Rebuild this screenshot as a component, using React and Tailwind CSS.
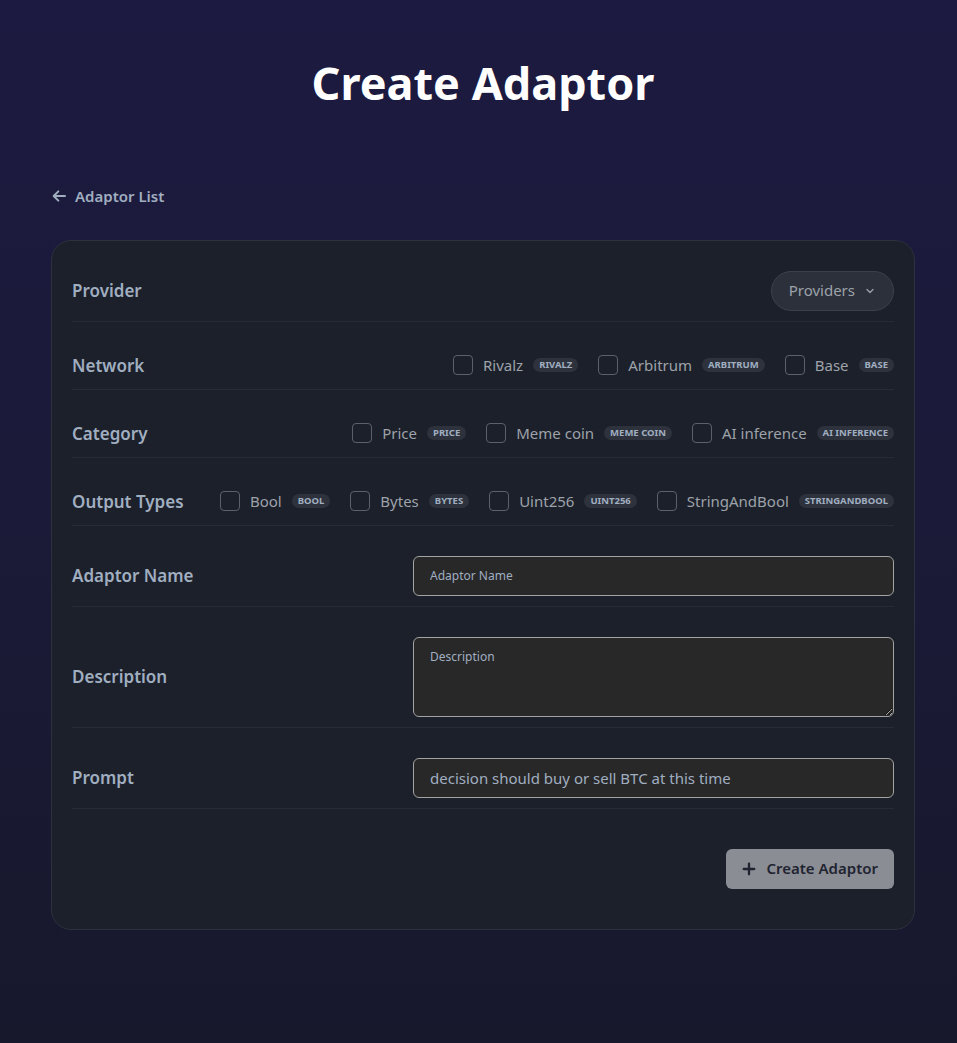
import React, { useState } from 'react';

const networks = [
    { name: "Rivalz", tag: "RIVALZ" },
    { name: "Arbitrum", tag: "ARBITRUM" },
    { name: "Base", tag: "BASE" },
];
const categories = [
    { name: "Price", tag: "PRICE" },
    { name: "Meme coin", tag: "MEME COIN" },
    { name: "AI inference", tag: "AI INFERENCE" },
];
const outputTypes = [
    { name: "Bool", tag: "BOOL" },
    { name: "Bytes", tag: "BYTES" },
    { name: "Uint256", tag: "UINT256" },
    { name: "StringAndBool", tag: "STRINGANDBOOL" },
];

function Row(props) {
    return (
        <div className="flex items-center justify-between py-2.5 border-b border-[#262b36]">
            <div className="text-[17px] leading-[27px] font-semibold text-[#a0aec0]">{props.label}</div>
            {props.children}
        </div>
    );
}

function CheckGroup(props) {
    const [checked, setChecked] = useState({});
    return (
        <div className="flex items-center gap-5">
            {props.items.map((item) => (
                <label key={item.tag} className="flex items-center cursor-pointer">
                    <span
                        onClick={() => setChecked({ ...checked, [item.tag]: !checked[item.tag] })}
                        className="w-5 h-5 rounded-[4px] border border-[#5b606b] mr-2.5"
                    ></span>
                    <span className="text-[15px] text-[#9ea2a9]">{item.name}</span>
                    <span className="ml-2.5 px-1.5 rounded-full bg-[#2d323d] text-[9.5px] leading-[14px] font-bold text-[#a0aec0]">{item.tag}</span>
                </label>
            ))}
        </div>
    );
}

/* Create adaptor form page. */
export default function App() {
    const [prompt, setPrompt] = useState("decision should buy or sell BTC at this time");

    return (
        <div className="min-h-[1043px] bg-gradient-to-b from-[#1c1a40] via-[#1b1a38] to-[#17182c] font-['Noto_Sans',sans-serif] pl-[51px] pr-[42px]">
            <h1 className="pt-[57px] text-center text-[45px] leading-[52px] font-bold text-white">Create Adaptor</h1>
            <div className="mt-[76px] flex items-center gap-[8px] text-[#a0aec0] text-[15px] font-semibold">
                <svg className="w-[16px] h-[16px]" viewBox="0 0 24 24" fill="none" stroke="currentColor" strokeWidth="3" strokeLinecap="round" strokeLinejoin="round">
                    <path d="M21 12H4M11 19l-7-7 7-7" />
                </svg>
                <span>Adaptor List</span>
            </div>
            <div className="mt-[32px] rounded-[20px] border border-[#2c313d] bg-[#1b202b] px-5 pt-5 pb-10 flex flex-col gap-5">
                <Row label="Provider">
                    <button className="h-10 px-[17px] rounded-full border border-[#3b404b] bg-[#2b303b] text-[#9ea2a9] text-[15px] flex items-center gap-[9px]">
                        Providers
                        <svg className="w-3 h-3" viewBox="0 0 24 24" fill="none" stroke="currentColor" strokeWidth="2.5" strokeLinecap="round" strokeLinejoin="round">
                            <path d="M6 9l6 6 6-6" />
                        </svg>
                    </button>
                </Row>
                <Row label="Network">
                    <CheckGroup items={networks} />
                </Row>
                <Row label="Category">
                    <CheckGroup items={categories} />
                </Row>
                <Row label="Output Types">
                    <CheckGroup items={outputTypes} />
                </Row>
                <Row label="Adaptor Name">
                    <input
                        placeholder="Adaptor Name"
                        className="w-[481px] h-10 rounded-md border border-[#a3a3a3] bg-[#282828] px-4 text-[12px] text-[#a0aec0] placeholder-[#a0aec0] outline-none"
                    />
                </Row>
                <Row label="Description">
                    <textarea
                        placeholder="Description"
                        className="block w-[481px] h-20 rounded-md border border-[#a3a3a3] bg-[#282828] px-4 py-2.5 text-[12px] text-[#a0aec0] placeholder-[#a0aec0] outline-none"
                    />
                </Row>
                <Row label="Prompt">
                    <input
                        value={prompt}
                        onChange={(e) => setPrompt(e.target.value)}
                        className="w-[481px] h-10 rounded-md border border-[#a3a3a3] bg-[#282828] px-4 text-[15px] text-[#a0aec0] outline-none"
                    />
                </Row>
                <div className="flex justify-end pt-5">
                    <button className="h-10 px-4 rounded-md bg-[#8b8d95] text-[#1f2430] text-[15px] font-semibold flex items-center gap-2.5">
                        <svg className="w-[14px] h-[14px]" viewBox="0 0 24 24" fill="none" stroke="currentColor" strokeWidth="4" strokeLinecap="round">
                            <path d="M12 3v18M3 12h18" />
                        </svg>
                        Create Adaptor
                    </button>
                </div>
            </div>
        </div>
    );
}
